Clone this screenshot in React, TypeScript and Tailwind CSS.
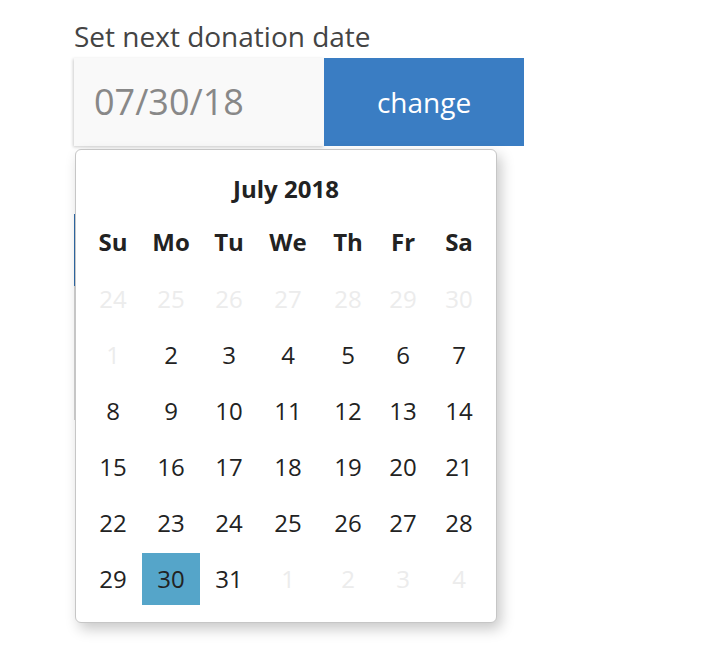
import React from "react";

const days = ["Su", "Mo", "Tu", "We", "Th", "Fr", "Sa"];

type Cell = { n: number; muted?: boolean; selected?: boolean };

const weeks: Cell[][] = [
    [24, 25, 26, 27, 28, 29, 30].map((n) => ({ n, muted: true })),
    [{ n: 1, muted: true }, ...[2, 3, 4, 5, 6, 7].map((n) => ({ n }))],
    [8, 9, 10, 11, 12, 13, 14].map((n) => ({ n })),
    [15, 16, 17, 18, 19, 20, 21].map((n) => ({ n })),
    [22, 23, 24, 25, 26, 27, 28].map((n) => ({ n })),
    [
        { n: 29 },
        { n: 30, selected: true },
        { n: 31 },
        ...[1, 2, 3, 4].map((n) => ({ n, muted: true })),
    ],
];

// columns sized like an auto-layout table
const cols = "grid grid-cols-[58px_58px_58px_60px_60px_50px_62px] w-[406px]";

function DatePicker() {
    return (
        <div className="absolute left-[1px] top-[128px] z-10 w-[422px] h-[474px] bg-white border border-[#c6c6c6] rounded-[6px] shadow-[4px_6px_14px_rgba(0,0,0,0.22)] px-[8px] pt-[14px]">
            {/* Month title */}
            <div className="h-[50px] flex items-center justify-center font-bold text-[24px] text-[#222]">
                July 2018
            </div>

            {/* Weekday header */}
            <div className={cols}>
                {days.map((d) => (
                    <div key={d} className="h-[56px] flex items-center justify-center font-bold text-[24px] text-[#222]">
                        {d}
                    </div>
                ))}
            </div>

            {/* Days */}
            <div className={cols}>
                {weeks.flat().map((c, i) => (
                    <div key={i} className="h-[56px] pt-[3px] pb-[1px]">
                        <div
                            className={
                                "h-full flex items-center justify-center text-[24px] " +
                                (c.selected ? "bg-[#55a5c9] text-[#222]" : c.muted ? "text-[#ececec]" : "text-[#222]")
                            }
                        >
                            {c.n}
                        </div>
                    </div>
                ))}
            </div>
        </div>
    );
}

export default function App() {
    return (
        <div className="min-h-screen bg-white pl-[74px] pt-[21px] font-['Open_Sans',sans-serif]">
            <div className="relative w-[450px]">
                <label className="block text-[28px] leading-[30px] text-[#444]">Set next donation date</label>

                <div className="mt-[7px] flex">
                    <div className="w-[250px] h-[88px] bg-[#f9f9f9] shadow-[-1px_1px_3px_rgba(0,0,0,0.2)] flex items-center pl-[20px] text-[36px] text-[#888]">
                        07/30/18
                    </div>
                    <button className="w-[200px] h-[88px] bg-[#3a7dc3] text-white text-[28px] flex items-center justify-center">
                        change
                    </button>
                </div>

                {/* form content beneath the popup */}
                <div className="mt-[68px] w-[300px] h-[72px] bg-[#2f6aa8]" />
                <div className="w-[300px] h-[134px] bg-[#d2d2d2]" />

                <DatePicker />
            </div>
        </div>
    );
}
